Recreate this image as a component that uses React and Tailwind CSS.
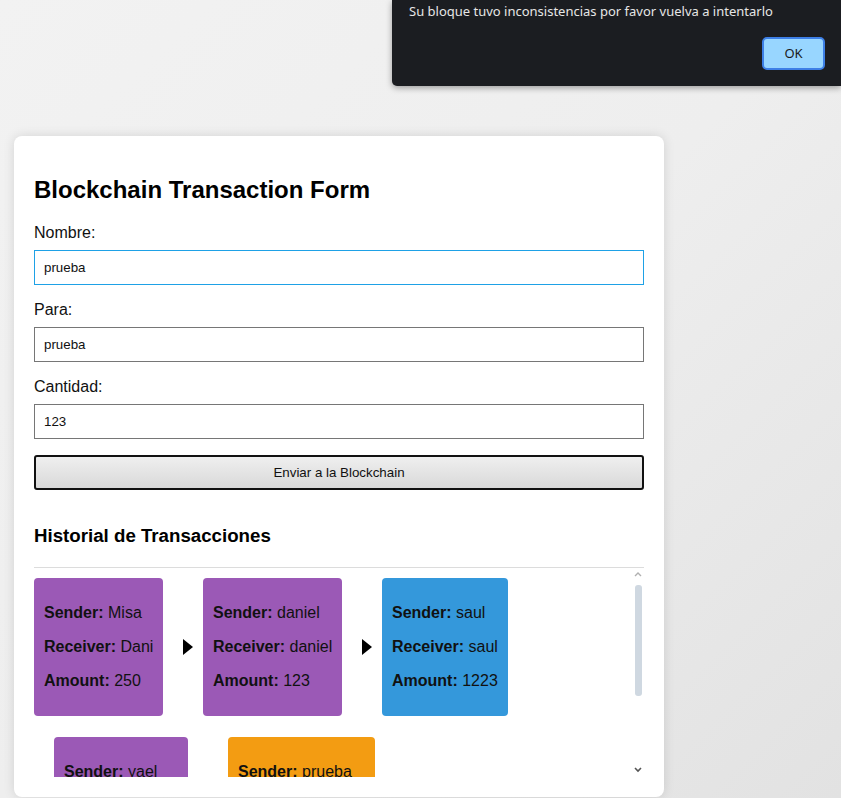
import React from 'react';

const blocks = [
    [
        { sender: 'Misa', receiver: 'Dani', amount: 250, color: 'bg-[#9b59b6]', w: 'w-[129px]' },
        { sender: 'daniel', receiver: 'daniel', amount: 123, color: 'bg-[#9b59b6]', w: 'w-[139px]' },
        { sender: 'saul', receiver: 'saul', amount: 1223, color: 'bg-[#3498db]', w: 'w-[126px]' },
    ],
    [
        { sender: 'yael', receiver: 'Misa', amount: 50, color: 'bg-[#9b59b6]', w: 'w-[134px]' },
        { sender: 'prueba', receiver: 'prueba', amount: 123, color: 'bg-[#f39c12]', w: 'w-[147px]' },
    ],
];

const Arrow = () => (
    <div className="ml-[20px] mr-[10px] w-0 h-0 border-l-[10px] border-l-black border-y-[8px] border-y-transparent" />
);

const Block = ({ b }) => (
    <div className={`${b.color} ${b.w} shrink-0 rounded-[4px] px-[10px] py-[10px] text-[16px] leading-[18px] text-[#111]`}>
        <p className="my-[16px] whitespace-nowrap"><b>Sender:</b> {b.sender}</p>
        <p className="my-[16px] whitespace-nowrap"><b>Receiver:</b> {b.receiver}</p>
        <p className="my-[16px] whitespace-nowrap"><b>Amount:</b> {b.amount}</p>
    </div>
);

const Field = ({ label, value, focused, first }) => (
    <div className={first ? '' : 'mt-[15px]'}>
        <label className="block text-[16px] leading-[18px] text-[#111] mb-[9px] pt-[1px]">{label}</label>
        <div className={`h-[35px] -mt-[1px] flex items-center pl-[9px] text-[13.33px] text-[#111] border ${focused ? 'border-[#1ea1e6]' : 'border-[#767676]'}`}>
            {value}
        </div>
    </div>
);

export default function App() {
    return (
        <div className="relative min-h-[798px] h-[798px] overflow-hidden bg-gradient-to-br from-[#f2f2f2] via-[#eeeeee] to-[#e2e2e2] font-['Liberation_Sans',Arial,sans-serif]">

            {/* alert dialog */}
            <div className="absolute top-0 left-[392px] right-0 h-[86px] bg-[#1b1d21] rounded-bl-[5px] shadow-[0_2px_6px_rgba(0,0,0,0.35)] font-['Noto_Sans','Open_Sans',sans-serif]">
                <p className="pl-[17px] pt-[1px] text-[13px] leading-[20px] text-[#e6e6e6]">Su bloque tuvo inconsistencias por favor vuelva a intentarlo</p>
                <div className="flex justify-end pr-[16px] mt-[16px]">
                    <button className="w-[63px] h-[33px] rounded-[5px] border-2 border-[#3d7fe6] bg-[#98d6ff] text-[13px] text-[#1a1a1a]">OK</button>
                </div>
            </div>

            {/* form card */}
            <div className="absolute left-[14px] top-[136px] w-[650px] h-[661px] bg-white rounded-[8px] shadow-[0_0_12px_rgba(0,0,0,0.12)] px-[20px] pt-[20px] pb-[20px] flex flex-col">
                <h2 className="mt-[20px] text-[24px] leading-[28px] font-bold text-black">Blockchain Transaction Form</h2>

                <div className="mt-[19px]">
                    <Field label="Nombre:" value="prueba" focused first />
                    <Field label="Para:" value="prueba" />
                    <Field label="Cantidad:" value="123" />
                </div>

                <button className="mt-[16px] h-[35px] w-full border-2 border-[#111] rounded-[3px] bg-gradient-to-b from-[#efefef] to-[#d9d9d9] text-[13.33px] text-[#111]">
                    Enviar a la Blockchain
                </button>

                <h3 className="mt-[35px] text-[18.7px] leading-[22px] font-bold text-black">Historial de Transacciones</h3>

                {/* history scroll box */}
                <div className="mt-[20px] flex-1 min-h-0 border-t border-[#dcdcdc] flex overflow-hidden">
                    <div className="flex-1 pt-[10px] overflow-hidden">
                        {blocks.map((row, ri) => (
                            <div key={ri} className={`flex items-center ${ri === 1 ? 'mt-[21px] ml-[20px]' : ''}`}>
                                {row.map((b, i) => (
                                    <React.Fragment key={i}>
                                        {i > 0 && <Arrow />}
                                        <Block b={b} />
                                    </React.Fragment>
                                ))}
                            </div>
                        ))}
                    </div>
                    <div className="w-[14px] shrink-0 flex flex-col items-center pt-[3px] pb-[4px]">
                        <svg width="8" height="6" viewBox="0 0 8 6" className="ml-[2px]"><path d="M1 5 L4 2 L7 5" fill="none" stroke="#b0b0b0" strokeWidth="1.4" /></svg>
                        <div className="mt-[8px] ml-[2px] w-[7px] h-[111px] rounded-[3px] bg-[#cfd8e1]" />
                        <div className="flex-1" />
                        <svg width="8" height="6" viewBox="0 0 8 6" className="ml-[2px]"><path d="M1 1 L4 4 L7 1" fill="none" stroke="#555" strokeWidth="1.6" /></svg>
                    </div>
                </div>
            </div>
        </div>
    );
}
